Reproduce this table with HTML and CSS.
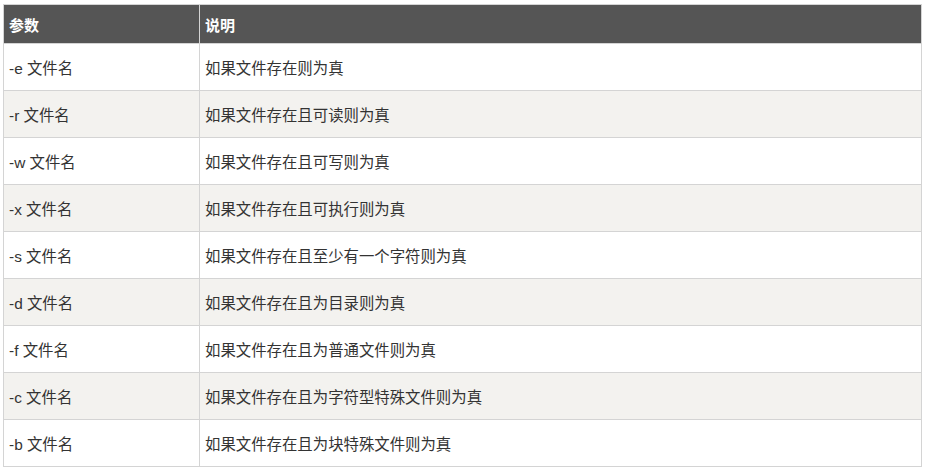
FILE: index.html
```html
<!DOCTYPE html>
<html lang="zh">
<head>
<meta charset="utf-8">
<link rel="stylesheet" href="styles.css">
</head>
<body>
<table class="ref">
  <thead>
    <tr><th class="col-param">参数</th><th>说明</th></tr>
  </thead>
  <tbody>
    <tr><td>-e 文件名</td><td>如果文件存在则为真</td></tr>
    <tr><td>-r 文件名</td><td>如果文件存在且可读则为真</td></tr>
    <tr><td>-w 文件名</td><td>如果文件存在且可写则为真</td></tr>
    <tr><td>-x 文件名</td><td>如果文件存在且可执行则为真</td></tr>
    <tr><td>-s 文件名</td><td>如果文件存在且至少有一个字符则为真</td></tr>
    <tr><td>-d 文件名</td><td>如果文件存在且为目录则为真</td></tr>
    <tr><td>-f 文件名</td><td>如果文件存在且为普通文件则为真</td></tr>
    <tr><td>-c 文件名</td><td>如果文件存在且为字符型特殊文件则为真</td></tr>
    <tr><td>-b 文件名</td><td>如果文件存在且为块特殊文件则为真</td></tr>
  </tbody>
</table>
</body>
</html>
```

FILE: styles.css
```css
html, body {
  margin: 0;
  background: #ffffff;
}
body {
  padding: 4px 0 0 3px;
  font-family: "Liberation Sans", "Noto Sans CJK SC", sans-serif;
  font-size: 15.4px;
  color: #333333;
}
.ref {
  border-collapse: collapse;
  width: 919px;
  border: 1px solid #d4d4d4;
}
.ref th {
  background: #555555;
  color: #ffffff;
  font-weight: bold;
  font-size: 15px;
  text-align: left;
  height: 38px;
  padding: 0 5px;
  border: 1px solid #d4d4d4;
}
.ref td {
  height: 46px;
  padding: 0 5px;
  border: 1px solid #d4d4d4;
  vertical-align: middle;
}
.ref .col-param {
  width: 185px;
}
.ref tbody tr:nth-child(even) td {
  background: #f3f2ef;
}
```
